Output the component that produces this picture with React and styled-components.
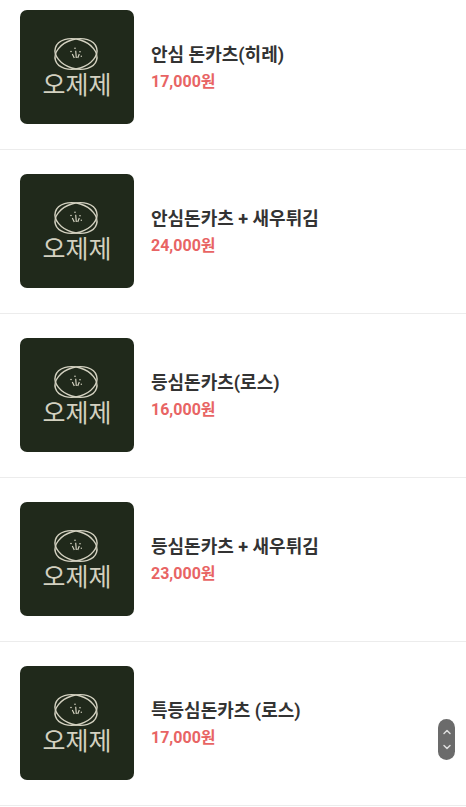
import React from 'react';
import styled, { createGlobalStyle } from 'styled-components';
import { ChevronUp, ChevronDown } from 'lucide-react';

const GlobalStyle = createGlobalStyle`
  * { box-sizing: border-box; }
  body {
    margin: 0;
    background: #fff;
    font-family: Roboto, "Noto Sans CJK KR", sans-serif;
  }
`;

const MenuList = styled.ul`
  margin: 0;
  padding: 0;
  list-style: none;
`;

const MenuItem = styled.li`
  display: flex;
  align-items: center;
  gap: 17px;
  padding: 24px 20px 25px;
  border-bottom: 1px solid #ececec;
  &:first-child { padding-top: 10px; }
`;

const Thumbnail = styled.svg`
  flex: none;
  width: 114px;
  height: 114px;
  border-radius: 7px;
  background: #20291b;
`;

const Wordmark = styled.text`
  font-family: "Noto Sans CJK KR", sans-serif;
  font-size: 25px;
  font-weight: 400;
  fill: #d3d1c0;
`;

const Details = styled.div`
  min-width: 0;
`;

const Name = styled.h2`
  margin: 0;
  font-size: 18px;
  line-height: 30px;
  font-weight: 700;
  color: #333;
`;

const Price = styled.p`
  margin: 0;
  font-size: 16px;
  line-height: 24px;
  font-weight: 700;
  color: #e86464;
`;

const Scroller = styled.div`
  position: fixed;
  right: 11px;
  bottom: 47px;
  display: flex;
  flex-direction: column;
  width: 17px;
  height: 41px;
  padding: 6px 0;
  border-radius: 9px;
  background: #6b6b6b;
`;

const ScrollButton = styled.button`
  flex: 1;
  display: flex;
  align-items: center;
  justify-content: center;
  padding: 0;
  border: 0;
  background: none;
  color: #ddd;
  cursor: pointer;
`;

const items = [
  { name: '안심 돈카츠(히레)', price: '17,000원' },
  { name: '안심돈카츠 + 새우튀김', price: '24,000원' },
  { name: '등심돈카츠(로스)', price: '16,000원' },
  { name: '등심돈카츠 + 새우튀김', price: '23,000원' },
  { name: '특등심돈카츠 (로스)', price: '17,000원' },
];

function Logo() {
  return (
    <Thumbnail viewBox="0 0 114 114" role="img" aria-label="오제제">
      <g fill="none" stroke="#d3d1c0" strokeWidth="1.4">
        <ellipse cx="56" cy="44" rx="21.5" ry="14.6" transform="rotate(17 56 44)" />
        <ellipse cx="56" cy="44" rx="21.5" ry="14.6" transform="rotate(-17 56 44)" />
        <path d="M52.3 44l2 4M55.7 40.7l.6 7.3M59.3 44l-1.6 4" strokeWidth="1.2" />
      </g>
      <g fill="#d3d1c0">
        <circle cx="51" cy="41.5" r=".8" />
        <circle cx="55" cy="38.3" r=".8" />
        <circle cx="60" cy="41.7" r=".8" />
        <circle cx="61.3" cy="46.3" r=".7" />
      </g>
      <Wordmark x="57" y="84" textAnchor="middle">오제제</Wordmark>
    </Thumbnail>
  );
}

export default function App() {
  return (
    <>
      <GlobalStyle />
      <MenuList>
        {items.map((item) => (
          <MenuItem key={item.name}>
            <Logo />
            <Details>
              <Name>{item.name}</Name>
              <Price>{item.price}</Price>
            </Details>
          </MenuItem>
        ))}
      </MenuList>
      <Scroller>
        <ScrollButton type="button" aria-label="위로"><ChevronUp size={12} strokeWidth={3} /></ScrollButton>
        <ScrollButton type="button" aria-label="아래로"><ChevronDown size={12} strokeWidth={3} /></ScrollButton>
      </Scroller>
    </>
  );
}
